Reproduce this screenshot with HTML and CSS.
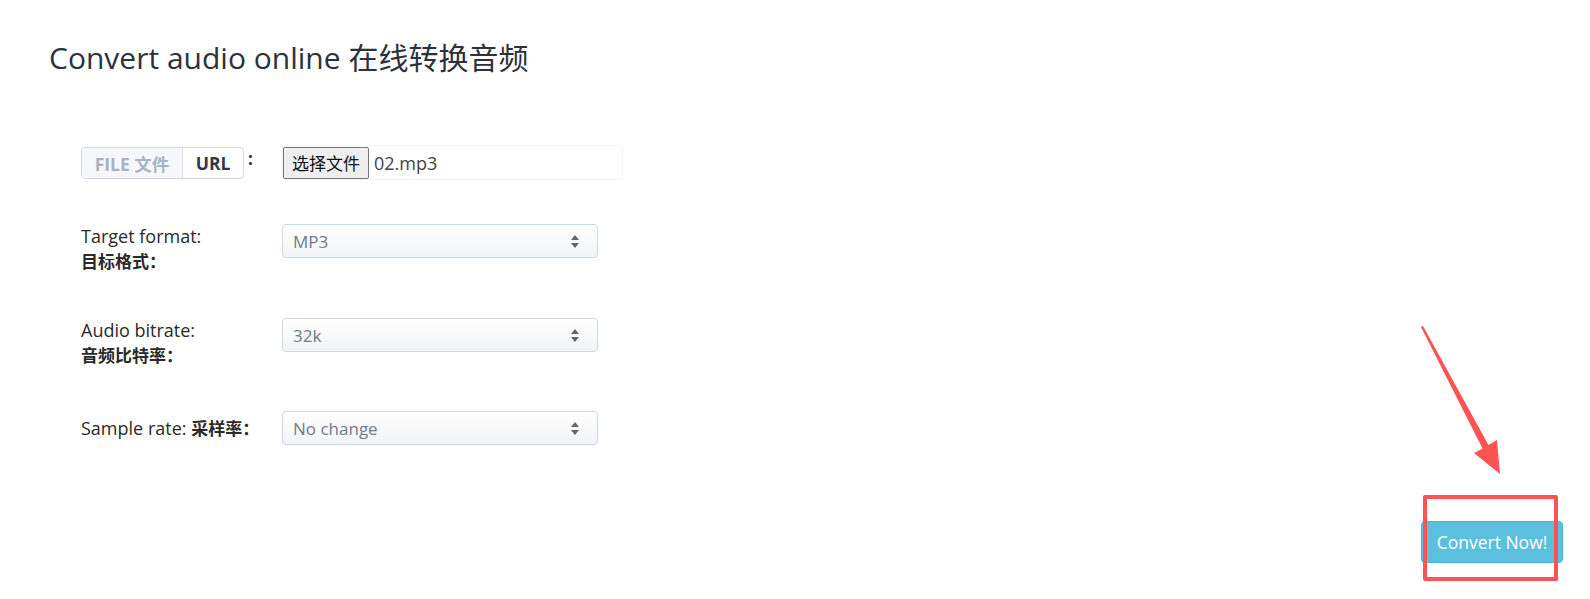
FILE: index.html
```html
<!DOCTYPE html>
<html lang="zh-CN">
<head>
  <meta charset="UTF-8">
  <meta name="viewport" content="width=device-width, initial-scale=1.0">
  <title>Convert audio online 在线转换音频</title>
  <link rel="stylesheet" href="styles.css">
</head>
<body>
  <div class="page">
    <h1 class="title">Convert audio online 在线转换音频</h1>

    <form class="convert-form" onsubmit="return false">
      <div class="form-row row-file">
        <div class="label-cell">
          <div class="source-tabs">
            <span class="tab tab-muted">FILE 文件</span>
            <span class="tab tab-active">URL</span>
          </div>
          <span class="colon">:</span>
        </div>
        <div class="file-field">
          <button type="button" class="file-btn">选择文件</button>
          <span class="file-name">02.mp3</span>
        </div>
      </div>

      <div class="form-row">
        <label class="label-cell field-label" for="format">Target format:<br><b>目标格式：</b></label>
        <div class="select-wrap">
          <select id="format" class="select">
            <option>MP3</option>
          </select>
          <svg class="select-arrows" width="8" height="13" viewBox="0 0 8 13"><path d="M4 0L8 5H0Z M4 13L8 8H0Z" fill="#5d6670"/></svg>
        </div>
      </div>

      <div class="form-row row-tight">
        <label class="label-cell field-label" for="bitrate">Audio bitrate:<br><b>音频比特率：</b></label>
        <div class="select-wrap">
          <select id="bitrate" class="select">
            <option>32k</option>
          </select>
          <svg class="select-arrows" width="8" height="13" viewBox="0 0 8 13"><path d="M4 0L8 5H0Z M4 13L8 8H0Z" fill="#5d6670"/></svg>
        </div>
      </div>

      <div class="form-row row-single">
        <label class="label-cell field-label" for="rate">Sample rate: <b>采样率：</b></label>
        <div class="select-wrap">
          <select id="rate" class="select">
            <option>No change</option>
          </select>
          <svg class="select-arrows" width="8" height="13" viewBox="0 0 8 13"><path d="M4 0L8 5H0Z M4 13L8 8H0Z" fill="#5d6670"/></svg>
        </div>
      </div>

      <div class="actions">
        <button type="submit" class="btn-convert">Convert Now!</button>
      </div>
    </form>

    <!-- annotation drawn over the screenshot -->
    <svg class="mark-arrow" width="100" height="165" viewBox="0 0 100 165">
      <path d="M11 7 L13 6 L78.5 125 L87 120 L90 154 L64 133 L72.5 128.5 Z" fill="#fd5353"/>
    </svg>
    <div class="mark-box"></div>
  </div>
</body>
</html>
```

FILE: styles.css
```css
* {
  margin: 0;
  padding: 0;
  box-sizing: border-box;
}

body {
  font-family: 'Open Sans', 'Noto Sans CJK SC', sans-serif;
  color: #333;
  background: #fff;
}

.page {
  position: relative;
  width: 1590px;
  height: 599px;
  padding: 0 27px 0 49px;
  overflow: hidden;
}

.title {
  margin-top: 40px;
  font-size: 30px;
  font-weight: 400;
  line-height: 36px;
  color: #2b323c;
}

.convert-form {
  margin-top: 71px;
  padding-left: 32px;
}

.form-row {
  display: flex;
  align-items: flex-start;
  margin-bottom: 44px;
}

.row-tight {
  margin-bottom: 43px;
}

.row-single {
  align-items: center;
}

.label-cell {
  width: 201px;
  flex: none;
}

.field-label {
  font-size: 18px;
  font-weight: 500;
  line-height: 25px;
  color: #2a2a2a;
}

.field-label b {
  font-size: 17px;
  font-weight: 700;
}

/* file / url switch */
.row-file .label-cell {
  display: flex;
  align-items: flex-start;
}

.source-tabs {
  display: flex;
  height: 32px;
  border: 1px solid #cbd9ea;
  border-radius: 4px;
  overflow: hidden;
}

.tab {
  display: flex;
  align-items: center;
  font-size: 17.5px;
  font-weight: 700;
}

.tab-muted {
  width: 101px;
  justify-content: center;
  background: #f5f7fa;
  color: #a5b3c4;
  border-right: 1px solid #d7e1ec;
}

.tab-active {
  width: 60px;
  justify-content: center;
  color: #2d3748;
}

.colon {
  margin-left: 4px;
  font-size: 17px;
  font-weight: 700;
  line-height: 24px;
}

.file-field {
  display: flex;
  align-items: center;
  width: 341px;
  height: 35px;
  margin-top: -2px;
  border: 1px solid #f4f5f7;
  border-radius: 3px;
}

.file-btn {
  height: 32px;
  padding: 0 8px;
  font-family: 'Noto Sans CJK SC', sans-serif;
  font-size: 17px;
  color: #111;
  background: #efefef;
  border: 1px solid #767676;
  border-radius: 2px;
}

.file-name {
  margin-left: 5px;
  font-size: 18px;
  color: #444;
}

/* selects */
.select-wrap {
  position: relative;
  width: 316px;
}

.select {
  display: block;
  width: 100%;
  height: 34px;
  padding: 0 10px;
  font-family: inherit;
  font-size: 17px;
  color: #6f7b88;
  background: linear-gradient(#fff, #f2f3f5);
  border: 1px solid #c9d7e7;
  border-radius: 4px;
  appearance: none;
  -webkit-appearance: none;
}

.select-arrows {
  position: absolute;
  right: 19px;
  top: 11px;
  pointer-events: none;
}

.actions {
  display: flex;
  justify-content: flex-end;
  margin-top: 76px;
}

.btn-convert {
  width: 142px;
  height: 42px;
  font-family: inherit;
  font-size: 17.5px;
  color: #fff;
  background: #5bc0de;
  border: 1px solid #46b8da;
  border-radius: 4px;
}

/* red annotation */
.mark-arrow {
  position: absolute;
  left: 1410px;
  top: 320px;
}

.mark-box {
  position: absolute;
  left: 1423px;
  top: 495px;
  width: 135px;
  height: 86px;
  border: 4px solid #fd5353;
  border-radius: 2px;
}
```
